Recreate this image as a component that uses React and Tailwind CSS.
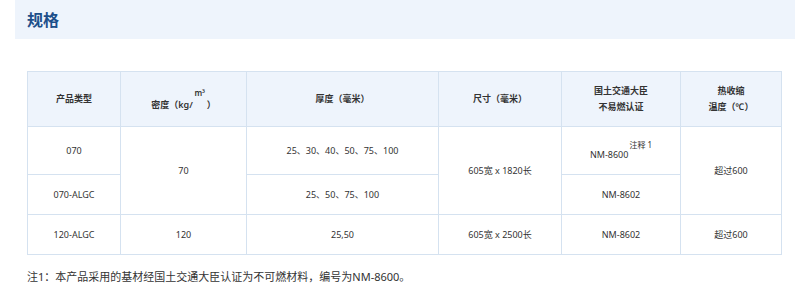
import React from "react";

const F = { fontFamily: '"Noto Sans", "Noto Sans CJK SC", sans-serif' };

export default function App() {
  const th = "border border-[#d5e2f0] bg-[#eef4fc] text-center align-middle font-semibold text-[#333] text-[9px] leading-[16px] p-0";
  const td = "border border-[#d5e2f0] bg-white text-center align-middle text-[#333] text-[9px] leading-[14px] p-0";
  return (
    <div className="w-[800px] h-[305px] bg-white overflow-hidden" style={F}>
      <div className="ml-[15px] w-[780px] h-[39px] bg-[#eef4fc] flex items-center pl-[12px]">
        <span className="text-[16px] font-bold text-[#1d4f8a] leading-none">规格</span>
      </div>
      <div className="pl-[27px] pt-[32px]">
        <table className="border-collapse table-fixed w-[755px]">
          <colgroup>
            <col className="w-[93px]" />
            <col className="w-[126px]" />
            <col className="w-[192px]" />
            <col className="w-[123px]" />
            <col className="w-[119px]" />
            <col className="w-[101px]" />
          </colgroup>
          <thead>
            <tr className="h-[55px]">
              <th className={th}>产品类型</th>
              <th className={th}>
                <span className="relative top-[6px]">
                  密度（kg/
                  <span className="relative -top-[12px] inline-block w-[14px] text-[8px]">m³</span>
                  ）
                </span>
              </th>
              <th className={th}>厚度（毫米）</th>
              <th className={th}>尺寸（毫米）</th>
              <th className={th}>国土交通大臣<br />不易燃认证</th>
              <th className={th}>热收缩<br />温度（℃）</th>
            </tr>
          </thead>
          <tbody>
            <tr className="h-[48px]">
              <td className={td}>070</td>
              <td className={td} rowSpan={2}>70</td>
              <td className={td}>25、30、40、50、75、100</td>
              <td className={td} rowSpan={2}>605宽 x 1820长</td>
              <td className={td}>
                <span className="relative top-[4px]">NM-8600</span>
                <span className="relative -top-[6px] text-[8px] ml-[1px]">注释 1</span>
              </td>
              <td className={td} rowSpan={2}>超过600</td>
            </tr>
            <tr className="h-[40px]">
              <td className={td}>070-ALGC</td>
              <td className={td}>25、50、75、100</td>
              <td className={td}>NM-8602</td>
            </tr>
            <tr className="h-[40px]">
              <td className={td}>120-ALGC</td>
              <td className={td}>120</td>
              <td className={td}>25,50</td>
              <td className={td}>605宽 x 2500长</td>
              <td className={td}>NM-8602</td>
              <td className={td}>超过600</td>
            </tr>
          </tbody>
        </table>
        <p className="mt-[14px] text-[11px] text-[#333] leading-[16px]">注1：本产品采用的基材经国土交通大臣认证为不可燃材料，编号为NM-8600。</p>
      </div>
    </div>
  );
}
